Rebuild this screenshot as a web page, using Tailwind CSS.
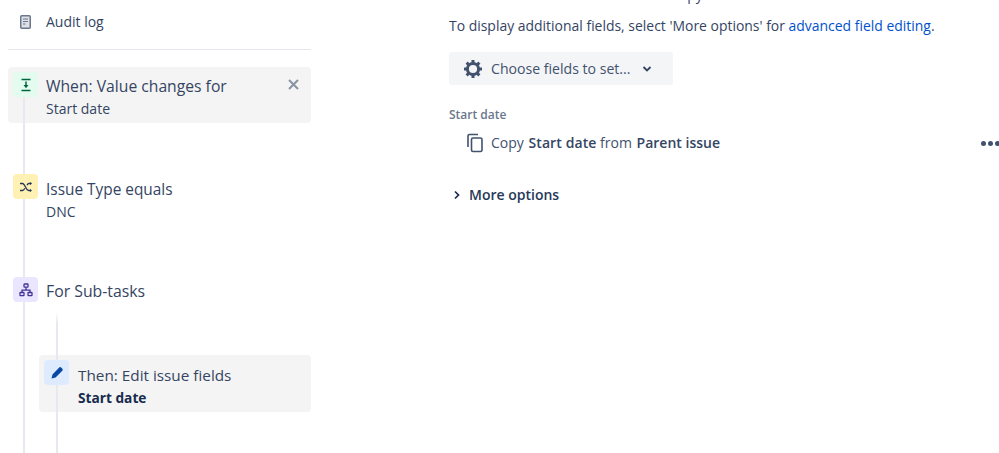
<!DOCTYPE html>
<html lang="en">
<head>
  <meta charset="UTF-8">
  <title>Automation rule</title>
  <script src="https://cdn.jsdelivr.net/npm/@tailwindcss/browser@4"></script>
</head>
<body class="bg-white overflow-hidden font-['Open_Sans','Noto_Sans',sans-serif] text-[#344563]">
  <div class="relative flex h-[453px] w-[999px] overflow-hidden">

    <!-- Rule chain -->
    <aside class="relative w-[303px] ml-2 shrink-0">
      <!-- connector lines -->
      <div class="absolute z-10 left-[15px] top-[90px] bottom-0 w-0.5 bg-[#e8e8ef]"></div>
      <div class="absolute z-10 left-12 top-[312px] bottom-0 w-0.5 bg-gradient-to-b from-white to-[#e8e8ef] to-[8%]"></div>

      <div class="flex h-[50px] items-center gap-[15px] border-b border-[#e6e6ed] pl-[12px] pb-[6px]">
        <svg class="h-[14px] w-[11px] shrink-0" viewBox="0 0 11 14" fill="none">
          <rect x="0.75" y="0.75" width="9.5" height="12.5" rx="1" fill="#dfe1e6" stroke="#6b778c" stroke-width="1.5"/>
          <path d="M3 4h5M3 6.5h5M3 9h2.5" stroke="#6b778c" stroke-width="1.2"/>
        </svg>
        <span class="text-[14px] leading-5">Audit log</span>
      </div>

      <div class="relative mt-[17px] flex h-[56px] w-[303px] items-start rounded-[4px] bg-[#f4f4f4] pl-[5px] pt-[5px]">
        <span class="relative z-20 flex h-[25px] w-[25px] items-center justify-center rounded-[4px] bg-[#e3fcef]">
          <svg class="h-[14px] w-[14px]" viewBox="0 0 14 14" fill="none">
            <path d="M2.5 1.5h9M2.5 12.5h9" stroke="#006644" stroke-width="1.4"/>
            <path d="M7 3.5v4" stroke="#006644" stroke-width="1.5"/>
            <path d="M4.5 7h5L7 10.2z" fill="#006644"/>
          </svg>
        </span>
        <div class="ml-[8px]">
          <div class="text-[15.7px] leading-[22px] mt-[3px]">When: Value changes for</div>
          <div class="text-[14px] leading-5 mt-[2px]">Start date</div>
        </div>
        <svg class="absolute right-[12px] top-[12px] h-[11px] w-[11px]" viewBox="0 0 11 11" fill="none">
          <path d="M1 1l9 9M10 1l-9 9" stroke="#8993a4" stroke-width="2"/>
        </svg>
      </div>

      <div class="relative mt-[51px] flex items-start pl-[5px]">
        <span class="relative z-20 flex h-[25px] w-[25px] items-center justify-center rounded-[4px] bg-[#fff0b3]">
          <svg class="h-[14px] w-[14px]" viewBox="0 0 14 14" fill="none" stroke="#253858" stroke-width="1.3">
            <path d="M1 3.5h2.5c2.5 0 3.5 7 6 7h2.5M1 10.5h2.5c1 0 1.7-1 2.3-2.2M8 5.2c.5-1 1-1.7 1.8-1.7h2.5"/>
            <path d="M11 2l2 1.5L11 5zM11 9l2 1.5L11 12z" fill="#253858" stroke="none"/>
          </svg>
        </span>
        <div class="ml-[8px]">
          <div class="text-[15.4px] leading-[22px] mt-[5px]">Issue Type equals</div>
          <div class="text-[14px] leading-5 mt-[1px]">DNC</div>
        </div>
      </div>

      <div class="relative mt-[55px] flex items-start pl-[5px]">
        <span class="relative z-20 flex h-[25px] w-[25px] items-center justify-center rounded-[4px] bg-[#eae6ff]">
          <svg class="h-[14px] w-[14px]" viewBox="0 0 14 14" fill="none" stroke="#403294" stroke-width="1.3">
            <rect x="5" y="1" width="4" height="3.2" rx=".6"/>
            <rect x="1" y="9.5" width="4" height="3.2" rx=".6"/>
            <rect x="9" y="9.5" width="4" height="3.2" rx=".6"/>
            <path d="M7 4.2v3M3 9.5V7.2h8v2.3"/>
          </svg>
        </span>
        <div class="ml-[8px] text-[15.8px] leading-[22px] mt-[3px]">For Sub-tasks</div>
      </div>

      <div class="relative mt-[53px] ml-[31px] flex h-[57px] w-[272px] items-start rounded-[4px] bg-[#f4f4f4] pl-[5px] pt-[5px]">
        <span class="relative z-20 flex h-[25px] w-[25px] items-center justify-center rounded-[4px] bg-[#deebff]">
          <svg class="h-[14px] w-[14px]" viewBox="0 0 14 14">
            <path d="M9.2 1.6a1.4 1.4 0 0 1 2 0l1.1 1.1a1.4 1.4 0 0 1 0 2L5.6 11.4 1.5 12.6l1-4.2z" fill="#0747a6"/>
          </svg>
        </span>
        <div class="ml-[9px]">
          <div class="text-[15.3px] leading-[22px] mt-[4px]">Then: Edit issue fields</div>
          <div class="text-[13.7px] leading-5 mt-[2px] font-bold text-[#172b4d]">Start date</div>
        </div>
      </div>
    </aside>

    <!-- Edit fields panel -->
    <main class="ml-[138px] flex-1">
      <p class="-mt-[15px] h-5 text-[14px] leading-5 whitespace-nowrap">Choose the field values to set and copy them.</p>
      <p class="mt-[11px] text-[13.95px] leading-5 whitespace-nowrap">To display additional fields, select 'More options' for <a class="text-[#0052cc]">advanced field editing</a>.</p>

      <button class="mt-[16px] flex h-[33px] w-[224px] items-center rounded-[3px] bg-[#f4f5f7] pl-[14px] text-[#42526e]">
        <svg class="h-[20px] w-[20px]" viewBox="0 0 20 20" fill="none">
          <circle cx="10" cy="10" r="5.6" stroke="#42526e" stroke-width="3"/>
          <path d="M10 1v3M10 16v3M1 10h3M16 10h3M3.6 3.6l2.2 2.2M14.2 14.2l2.2 2.2M3.6 16.4l2.2-2.2M14.2 5.8l2.2-2.2" stroke="#42526e" stroke-width="3"/>
        </svg>
        <span class="ml-[8px] text-[14.1px] font-medium">Choose fields to set...</span>
        <svg class="ml-[12px] h-[8px] w-[10px]" viewBox="0 0 10 8" fill="none">
          <path d="M1.5 2l3.5 3.5L8.5 2" stroke="#344563" stroke-width="1.8"/>
        </svg>
      </button>

      <div class="mt-[22px] text-[12px] leading-4 font-semibold text-[#6b778c]">Start date</div>

      <div class="mt-[10px] flex items-center pl-[17px]">
        <svg class="h-[20px] w-[18px]" viewBox="0 0 18 20" fill="none" stroke="#42526e" stroke-width="1.6">
          <path d="M2 14V3a1.5 1.5 0 0 1 1.5-1.5H12"/>
          <rect x="5.5" y="5" width="10.5" height="13.5" rx="1.5"/>
        </svg>
        <span class="ml-[7px] text-[14px] leading-5 text-[#42526e]">Copy <b class="ml-[1px] font-semibold text-[#344563] tracking-[0.1px]">Start date</b> from <b class="ml-[1px] font-semibold text-[#344563]">Parent issue</b></span>
        <div class="ml-auto -mr-[1px] flex gap-[2px]">
          <span class="h-[5px] w-[5px] rounded-full bg-[#42526e]"></span>
          <span class="h-[5px] w-[5px] rounded-full bg-[#42526e]"></span>
          <span class="h-[5px] w-[5px] rounded-full bg-[#42526e]"></span>
        </div>
      </div>

      <div class="mt-[32px] flex items-center pl-[4px]">
        <svg class="h-[10px] w-[8px]" viewBox="0 0 8 10" fill="none">
          <path d="M2 1.5L5.5 5 2 8.5" stroke="#172b4d" stroke-width="1.7"/>
        </svg>
        <span class="ml-[8px] text-[14px] leading-5 font-semibold text-[#253858]">More options</span>
      </div>
    </main>
  </div>
</body>
</html>
